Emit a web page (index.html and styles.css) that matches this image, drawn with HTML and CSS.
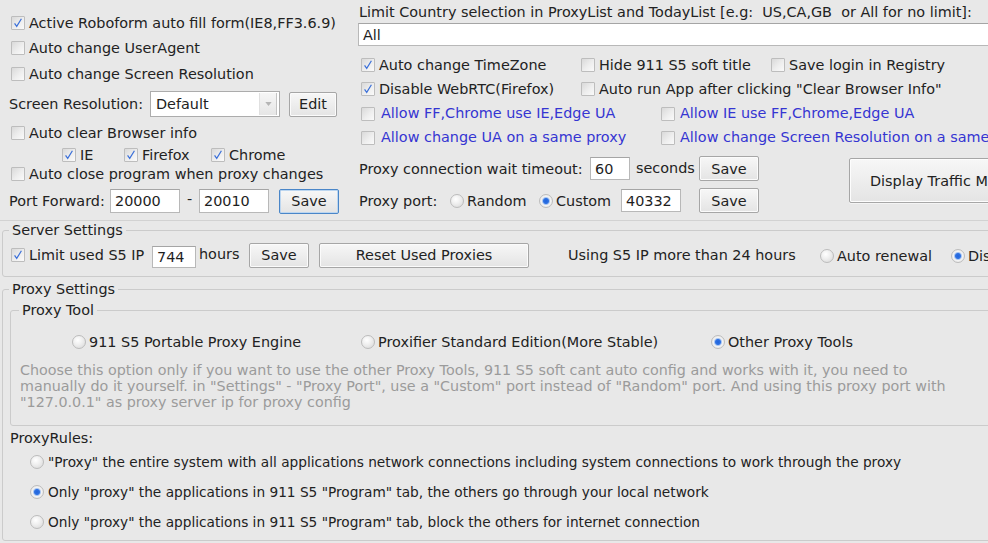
FILE: index.html
```html
<!DOCTYPE html>
<html>
<head>
<meta charset="utf-8">
<link rel="stylesheet" href="styles.css">
</head>
<body>
<div class="page">
  <div class="top">
    <div class="col-left">
      <div class="row r1"><span class="cb on"><svg viewBox="0 0 14 14"><polyline points="3,7.5 5.5,11 11,2"/></svg></span>Active Roboform auto fill form(IE8,FF3.6.9)</div>
      <div class="row r2"><span class="cb"></span>Auto change UserAgent</div>
      <div class="row r3"><span class="cb"></span>Auto change Screen Resolution</div>
      <div class="row r4">
        <span class="lbl-res">Screen Resolution:</span>
        <div class="select"><span class="sel-text">Default</span><span class="sel-arrow"><svg viewBox="0 0 8 5"><polygon points="0,0 8,0 4,5"/></svg></span></div>
        <span class="btn btn-edit">Edit</span>
      </div>
      <div class="row r5"><span class="cb"></span>Auto clear Browser info</div>
      <div class="row r6">
        <span class="sub sub-ie"><span class="cb on"><svg viewBox="0 0 14 14"><polyline points="3,7.5 5.5,11 11,2"/></svg></span>IE</span>
        <span class="sub sub-ff"><span class="cb on"><svg viewBox="0 0 14 14"><polyline points="3,7.5 5.5,11 11,2"/></svg></span>Firefox</span>
        <span class="sub"><span class="cb on"><svg viewBox="0 0 14 14"><polyline points="3,7.5 5.5,11 11,2"/></svg></span>Chrome</span>
      </div>
      <div class="row r7"><span class="cb"></span>Auto close program when proxy changes</div>
      <div class="row r8">
        <span class="lbl-port">Port Forward:</span>
        <span class="input in-port">20000</span>
        <span class="dash">-</span>
        <span class="input in-port">20010</span>
        <span class="btn btn-save btn-focus">Save</span>
      </div>
    </div>
    <div class="col-right">
      <div class="limit-label">Limit Country selection in ProxyList and TodayList [e.g:&nbsp; US,CA,GB&nbsp; or All for no limit]:</div>
      <div class="input limit-input">All</div>
      <div class="grid3 row-a">
        <span class="opt"><span class="cb on"><svg viewBox="0 0 14 14"><polyline points="3,7.5 5.5,11 11,2"/></svg></span>Auto change TimeZone</span>
        <span class="opt"><span class="cb"></span>Hide 911 S5 soft title</span>
        <span class="opt"><span class="cb"></span>Save login in Registry</span>
      </div>
      <div class="grid3 row-b">
        <span class="opt"><span class="cb on"><svg viewBox="0 0 14 14"><polyline points="3,7.5 5.5,11 11,2"/></svg></span>Disable WebRTC(Firefox)</span>
        <span class="opt"><span class="cb"></span>Auto run App after clicking "Clear Browser Info"</span>
      </div>
      <div class="grid2 row-c">
        <span class="opt blue"><span class="cb"></span>Allow FF,Chrome use IE,Edge UA</span>
        <span class="opt blue blue2"><span class="cb"></span>Allow IE use FF,Chrome,Edge UA</span>
      </div>
      <div class="grid2 row-d">
        <span class="opt blue"><span class="cb"></span>Allow change UA on a same proxy</span>
        <span class="opt blue blue2"><span class="cb"></span>Allow change Screen Resolution on a same proxy</span>
      </div>
      <div class="ef">
        <div class="ef-rows">
          <div class="row re">
            <span class="lbl-wait">Proxy connection wait timeout:</span>
            <span class="input in-wait">60</span>
            <span class="lbl-sec">seconds</span>
            <span class="btn btn-save">Save</span>
          </div>
          <div class="row rf">
            <span class="lbl-pp">Proxy port:</span>
            <span class="ropt ropt-rand"><span class="rb"></span>Random</span>
            <span class="ropt ropt-cust"><span class="rb on"></span>Custom</span>
            <span class="input in-pp">40332</span>
            <span class="btn btn-save btn-pp">Save</span>
          </div>
        </div>
        <span class="btn btn-traffic">Display Traffic Monitor</span>
      </div>
    </div>
  </div>

  <fieldset class="box server">
    <legend>Server Settings</legend>
    <div class="row srow">
      <span class="opt opt-limit"><span class="cb on"><svg viewBox="0 0 14 14"><polyline points="3,7.5 5.5,11 11,2"/></svg></span>Limit used S5 IP</span>
      <span class="input in-hours">744</span>
      <span class="lbl-hours">hours</span>
      <span class="btn btn-save">Save</span>
      <span class="btn btn-reset">Reset Used Proxies</span>
      <span class="lbl-using">Using S5 IP more than 24 hours</span>
      <span class="ropt ropt-auto"><span class="rb"></span>Auto renewal</span>
      <span class="ropt ropt-dis"><span class="rb on"></span>Disable</span>
    </div>
  </fieldset>

  <fieldset class="box proxy">
    <legend>Proxy Settings</legend>
    <fieldset class="box tool">
      <legend>Proxy Tool</legend>
      <div class="row trow">
        <span class="ropt t1"><span class="rb"></span>911 S5 Portable Proxy Engine</span>
        <span class="ropt t2"><span class="rb"></span>Proxifier Standard Edition(More Stable)</span>
        <span class="ropt"><span class="rb on"></span>Other Proxy Tools</span>
      </div>
      <p class="desc">Choose this option only if you want to use the other Proxy Tools, 911 S5 soft cant auto config and works with it, you need to<br>manually do it yourself. in "Settings" - "Proxy Port", use a "Custom" port instead of "Random" port. And using this proxy port with<br>"127.0.0.1" as proxy server ip for proxy config</p>
    </fieldset>
    <div class="rules-label">ProxyRules:</div>
    <div class="rule"><span class="rb"></span>"Proxy" the entire system with all applications network connections including system connections to work through the proxy</div>
    <div class="rule"><span class="rb on"></span>Only "proxy" the applications in 911 S5 "Program" tab, the others go through your local network</div>
    <div class="rule"><span class="rb"></span>Only "proxy" the applications in 911 S5 "Program" tab, block the others for internet connection</div>
  </fieldset>
</div>
</body>
</html>
```
FILE: styles.css
```css
html, body {
  margin: 0;
  padding: 0;
}
body {
  background: #e8e8e8;
  width: 988px;
  height: 543px;
  overflow: hidden;
  font-family: "DejaVu Sans", Verdana, sans-serif;
  font-size: 14.4px;
  color: #222;
  white-space: nowrap;
}
.page {
  width: 1120px;
}
.top {
  display: flex;
  height: 220px;
  border-bottom: 1px solid #d2d2d2;
}
.row {
  display: flex;
  align-items: center;
}
/* checkbox */
.cb {
  flex: none;
  box-sizing: border-box;
  width: 14px;
  height: 14px;
  margin-right: 4px;
  border: 1px solid #bdbdbd;
  border-radius: 1px;
  background: linear-gradient(135deg, #d9d9d9 0%, #eeeeee 55%, #fafafa 100%);
  display: inline-flex;
}
.cb svg {
  width: 12px;
  height: 12px;
}
.cb svg polyline {
  fill: none;
  stroke: #3b70d9;
  stroke-width: 1.4;
}
/* radio */
.rb {
  flex: none;
  box-sizing: border-box;
  width: 14px;
  height: 14px;
  border-radius: 50%;
  border: 1px solid #bcbcbc;
  background: radial-gradient(circle at 40% 35%, #ffffff 0%, #f0f0f0 40%, #d6d6d6 100%);
  margin-right: 3px;
}
.rb.on {
  background: radial-gradient(circle at 50% 50%, #1f62dc 0, #2f72e2 2.5px, #a9c6f2 3.5px, #f3f3f3 4.5px, #dedede 100%);
}
/* inputs / buttons */
.input {
  box-sizing: border-box;
  display: inline-flex;
  align-items: center;
  background: #fff;
  border: 1px solid #b8b8b8;
  border-top-color: #a5a5a5;
  padding-left: 4px;
  color: #1e1e1e;
}
.btn {
  box-sizing: border-box;
  display: inline-flex;
  align-items: center;
  justify-content: center;
  border: 1px solid #a6a6a6;
  border-radius: 2px;
  background: linear-gradient(#f7f7f7, #e4e4e4);
  box-shadow: inset 0 0 0 1px #fbfbfb;
  color: #222;
}
.btn-save {
  width: 60px;
  height: 25px;
}
.btn-focus {
  border-color: #4a86c8;
  box-shadow: inset 0 0 0 1px #bcd6f0;
}

/* left column */
.col-left {
  flex: none;
  width: 349px;
  padding: 11px 0 0 9px;
}
.col-left > .row > .cb {
  margin-left: 2px;
}
.r1 { height: 24px; }
.r2 { height: 26px; }
.r3 { height: 26px; }
.r4 { height: 34px; }
.r5 { height: 24px; }
.r6 { height: 19px; }
.r7 { height: 20px; }
.r8 { height: 34px; }
.lbl-res {
  width: 141px;
}
.select {
  box-sizing: border-box;
  width: 130px;
  height: 26px;
  display: flex;
  align-items: center;
  background: #fff;
  border: 1px solid #acacac;
  padding: 0 2px 0 5px;
}
.sel-text {
  flex: 1;
}
.sel-arrow {
  box-sizing: border-box;
  width: 18px;
  height: 22px;
  border-left: 1px solid #e0e0e0;
  border-right: 1px solid #c4c4c4;
  background: linear-gradient(#f6f6f6, #e6e6e6);
  display: flex;
  align-items: center;
  justify-content: center;
}
.sel-arrow svg {
  width: 7px;
  height: 4px;
  fill: #b5b5b5;
}
.btn-edit {
  width: 48px;
  height: 25px;
  margin-left: 9px;
}
.r6 {
  padding-left: 53px;
}
.sub {
  display: inline-flex;
  align-items: center;
}
.sub .cb { margin-right: 4px; }
.sub-ie { width: 62px; }
.sub-ff { width: 87px; }
.lbl-port {
  width: 101px;
}
.in-port {
  width: 70px;
  height: 24px;
}
.dash {
  width: 19px;
  text-align: center;
  margin-top: -4px;
}
.r8 .btn-save {
  margin-left: 10px;
}

/* right column */
.col-right {
  flex: none;
  width: 760px;
  padding-top: 1px;
}
.limit-label {
  height: 22px;
  line-height: 22px;
  padding-left: 1px;
}
.limit-input {
  width: 700px;
  height: 23px;
}
.grid3, .grid2 {
  display: grid;
  align-items: center;
  padding-left: 3px;
}
.grid3 { grid-template-columns: 220px 190px auto; }
.grid2 { grid-template-columns: 300px auto; }
.row-a { height: 25px; margin-top: 6px; }
.row-b { height: 24px; }
.row-c { height: 23px; }
.row-d { height: 25px; }
.opt {
  display: inline-flex;
  align-items: center;
}
.blue {
  color: #3535d2;
}
.blue .cb {
  margin-right: 6px;
  margin-top: 3px;
}
.blue2 .cb {
  margin-right: 5px;
}
.ef {
  display: flex;
  margin-top: 6px;
}
.ef-rows {
  width: 491px;
}
.re { height: 27px; }
.rf { height: 27px; margin-top: 5px; }
.lbl-wait {
  width: 231px;
  padding-left: 1px;
}
.in-wait {
  width: 40px;
  height: 23px;
}
.lbl-sec {
  width: 63px;
  padding-left: 6px;
  margin-top: -2px;
}
.lbl-pp {
  width: 91px;
  padding-left: 1px;
}
.ropt {
  display: inline-flex;
  align-items: center;
}
.ropt-rand { width: 89px; }
.ropt-cust { width: 82px; }
.in-pp {
  width: 60px;
  height: 23px;
}
.btn-pp {
  margin-left: 18px;
}
.btn-traffic {
  width: 220px;
  height: 45px;
  margin-top: 3px;
  justify-content: flex-start;
  padding-left: 20px;
  box-shadow: inset 0 0 0 1px #fdfdfd, 0 1px 0 #f4f4f4;
}

/* group boxes */
.box {
  margin: 0;
  padding: 0;
  min-width: 0;
  border: 1px solid #cbcbcb;
  border-radius: 3px;
}
.box > legend {
  padding: 0 3px;
  margin-left: 6px;
  line-height: 16px;
  height: 16px;
}
.server {
  margin: 1px 0 0 2px;
  width: 1100px;
  padding: 4px 0 8px 0;
}
.srow {
  height: 26px;
  padding-left: 8px;
}
.opt-limit {
  width: 141px;
}
.in-hours {
  width: 44px;
  height: 22px;
  margin-top: 4px;
}
.lbl-hours {
  width: 50px;
  padding-left: 3px;
  margin-top: -2px;
}
.btn-reset {
  width: 210px;
  margin-left: 10px;
  height: 25px;
}
.lbl-using {
  width: 252px;
  margin-left: 39px;
}
.ropt-auto {
  width: 131px;
}
.ropt-auto, .ropt-dis {
  margin-top: 2px;
}
.proxy {
  margin: 4px 0 0 2px;
  width: 1100px;
  padding: 0 0 3px 0;
}
.tool {
  margin: 5px 0 0 7px;
  padding: 12px 0 15px 0;
  width: 1080px;
}
.tool > legend {
  margin-left: 8px;
}
.trow {
  height: 24px;
  padding-left: 61px;
}
.t1 { width: 289px; }
.t2 { width: 350px; }
.desc {
  margin: 8px 0 0 9px;
  line-height: 16px;
  font-size: 14.3px;
  color: #9b9b9b;
}
.rules-label {
  margin-top: 3px;
  line-height: 18px;
  padding-left: 7px;
}
.rule {
  display: flex;
  align-items: center;
  height: 30px;
  padding-left: 27px;
  font-size: 13.7px;
}
.rule .rb {
  margin-right: 4px;
}
```
